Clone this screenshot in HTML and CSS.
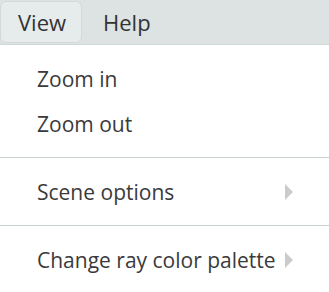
FILE: index.html
```html
<!DOCTYPE html>
<html>
<head>
<meta charset="utf-8">
<link rel="stylesheet" href="styles.css">
</head>
<body>
<div class="menubar">
  <div class="menu-title active">View</div>
  <div class="menu-title">Help</div>
</div>
<div class="dropdown">
  <div class="item">Zoom in</div>
  <div class="item">Zoom out</div>
  <div class="sep"></div>
  <div class="item sub"><span class="label">Scene options</span><span class="arrow"></span></div>
  <div class="sep"></div>
  <div class="item sub"><span class="label">Change ray color palette</span><span class="arrow"></span></div>
</div>
</body>
</html>
```
FILE: styles.css
```css
html, body {
  margin: 0;
  padding: 0;
  background: #ffffff;
}
body {
  font-family: "Open Sans", "Noto Sans", sans-serif;
  color: #3a3a3a;
  width: 329px;
  height: 292px;
  overflow: hidden;
}
.menubar {
  display: flex;
  align-items: center;
  height: 44px;
  background: #dde3e3;
  border-bottom: 1px solid #cfd7d7;
}
.menu-title {
  font-size: 22px;
  line-height: 42px;
  color: #333;
  box-sizing: border-box;
  height: 42px;
  padding: 0 18px;
}
.menu-title.active {
  width: 82px;
  background: #e6ebeb;
  border: 1px solid #d1d9d9;
  border-radius: 6px;
  padding: 0 0 0 17px;
  line-height: 40px;
}
.menu-title + .menu-title {
  padding-left: 21px;
}
.dropdown {
  background: #fff;
  padding: 11px 0 8px;
}
.item {
  display: flex;
  align-items: center;
  height: 45px;
  padding: 0 36px 0 37px;
  font-size: 21px;
}
.item .label {
  flex: 1;
}
.item.sub .arrow {
  width: 0;
  height: 0;
  border-top: 8px solid transparent;
  border-bottom: 8px solid transparent;
  border-left: 8px solid #cbcbcb;
}
.sep {
  height: 1px;
  background: #c9d1d1;
  margin: 11px 0;
}
```
